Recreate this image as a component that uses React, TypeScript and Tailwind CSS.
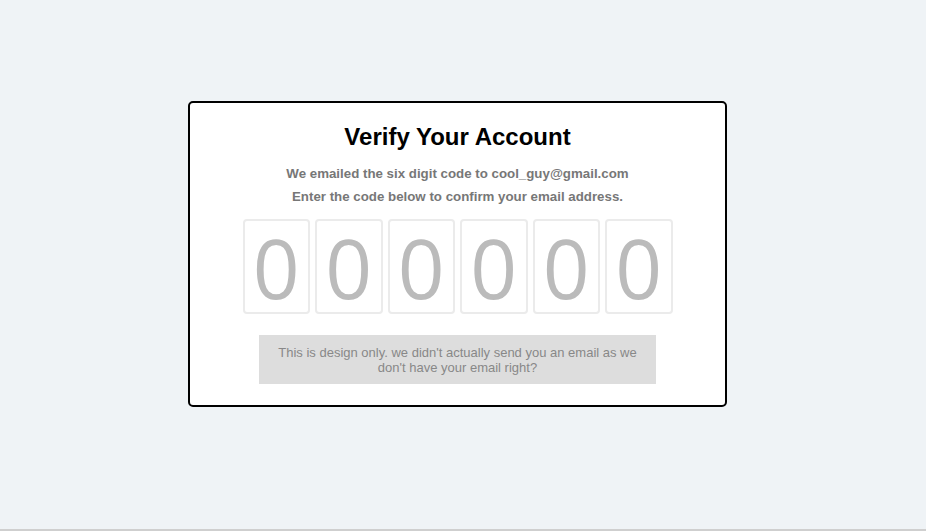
export default function App() {
  const digits = ["0", "0", "0", "0", "0", "0"];
  return (
    <div className="flex flex-col w-full h-[531px] bg-[#eff3f6]" style={{ fontFamily: '"Liberation Sans", Arial, sans-serif' }}>
      <div className="flex-1 flex justify-center items-start pt-[101px] pr-[11px]">
        <div className="w-[539px] h-[306px] bg-white border-2 border-black rounded-[5px] flex flex-col items-center pt-[20px]">
          <h1 className="text-[24px] leading-[28px] font-bold text-black">Verify Your Account</h1>
          <p className="mt-[11px] text-[13.3px] leading-[23px] font-bold text-[#777777] text-center">
            We emailed the six digit code to cool_guy@gmail.com
            <br />
            Enter the code below to confirm your email address.
          </p>
          <div className="mt-[11px] grid grid-cols-6 gap-[5px] w-[430px]">
            {digits.map((d, i) => (
              <div
                key={i}
                className="h-[95px] border-2 border-[#ebebeb] rounded-[4px] flex items-center justify-center text-[#bbbbbb] text-[82px] leading-none"
                style={{ fontFamily: '"Open Sans", "Noto Sans", sans-serif' }}
              >
                {d}
              </div>
            ))}
          </div>
          <div className="mt-[21px] w-[397px] h-[49px] bg-[#dddddd] px-[14px] flex items-center justify-center text-center text-[13px] leading-[15px] text-[#888888]">
            This is design only. we didn't actually send you an email as we don't have your email right?
          </div>
        </div>
      </div>
      <div className="h-[2px] bg-[#cfcfcf]" />
    </div>
  );
}
